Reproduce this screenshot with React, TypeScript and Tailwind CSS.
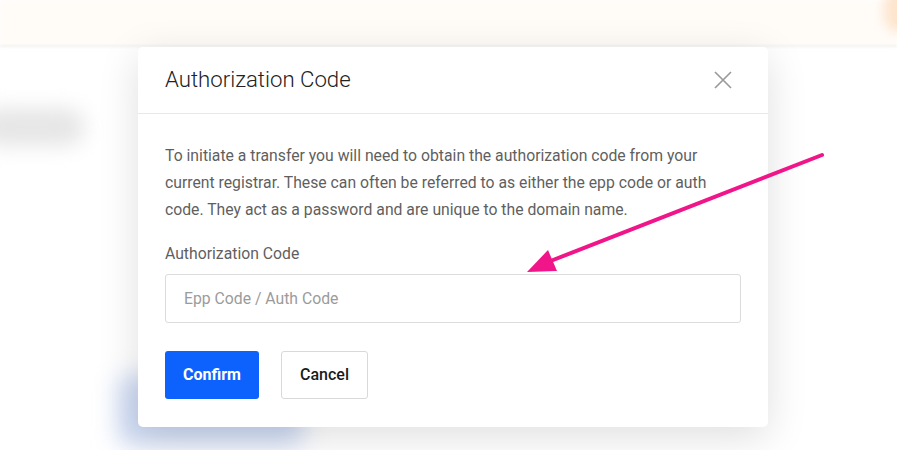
export default function App() {
  return (
    <div className="relative h-[450px] w-[897px] overflow-hidden bg-white font-['Roboto',sans-serif]">
      {/* Blurred page behind the modal */}
      <div className="absolute inset-x-0 top-0 h-[46px] bg-[#fffcf8] blur-[2px]" />
      <div className="absolute inset-x-0 top-[45px] h-[2px] bg-[#f3f2f0] blur-[1px]" />
      <div className="absolute right-[-22px] top-[-12px] h-[45px] w-[35px] rounded-full bg-[#fde4cc] blur-[6px]" />
      <div className="absolute left-[-20px] top-[108px] h-[38px] w-[105px] rounded-full bg-[#e6e6e6] blur-[10px]" />
      <div className="absolute left-[118px] top-[375px] h-[70px] w-[185px] rounded-[10px] bg-[#cbd8f2] blur-[12px]" />

      {/* Modal */}
      <div className="relative pl-[138px] pt-[47px]">
        <div className="w-[630px] rounded-[5px] bg-white shadow-[0_10px_40px_rgba(0,0,0,0.13)]">
          <div className="flex h-[67px] items-center justify-between border-b border-[#e8e8e8] pl-[27px] pr-[36px]">
            <h2 className="text-[22.2px] font-light text-[#222]">Authorization Code</h2>
            <svg width="18" height="18" viewBox="0 0 18 18" className="text-[#9a9a9a]">
              <path d="M1 1L17 17M17 1L1 17" stroke="currentColor" strokeWidth="1.7" fill="none" />
            </svg>
          </div>
          <div className="px-[27px] pb-[28px] pt-[28px]">
            <p className="text-[15.75px] leading-[27px] text-[#5f5f5f]">
              To initiate a transfer you will need to obtain the authorization code from your current registrar. These can
              often be referred to as either the epp code or auth code. They act as a password and are unique to the domain
              name.
            </p>
            <label className="mt-[20px] block text-[15.75px] leading-[22px] text-[#5f5f5f]">Authorization Code</label>
            <input
              className="mt-[9px] block h-[49px] w-full rounded-[3px] border border-[#dcdcdc] px-[18px] text-[15.75px] text-[#333] outline-none placeholder:text-[#9b9b9b]"
              placeholder="Epp Code / Auth Code"
            />
            <div className="mt-[28px] flex gap-[22px]">
              <button className="h-[48px] w-[94px] rounded-[3px] bg-[#0d62fe] text-[16px] font-bold text-white">
                Confirm
              </button>
              <button className="h-[48px] w-[87px] rounded-[3px] border border-[#d9d9d9] bg-white text-[16px] font-medium text-[#1a1a1a]">
                Cancel
              </button>
            </div>
          </div>
        </div>
      </div>

      {/* Annotation arrow */}
      <svg className="pointer-events-none absolute left-0 top-0" width="897" height="450" viewBox="0 0 897 450">
        <line x1="822" y1="155" x2="548" y2="262" stroke="#f0168a" strokeWidth="4" strokeLinecap="round" />
        <polygon points="527,272 548,250 557,271" fill="#f0168a" />
      </svg>
    </div>
  )
}
